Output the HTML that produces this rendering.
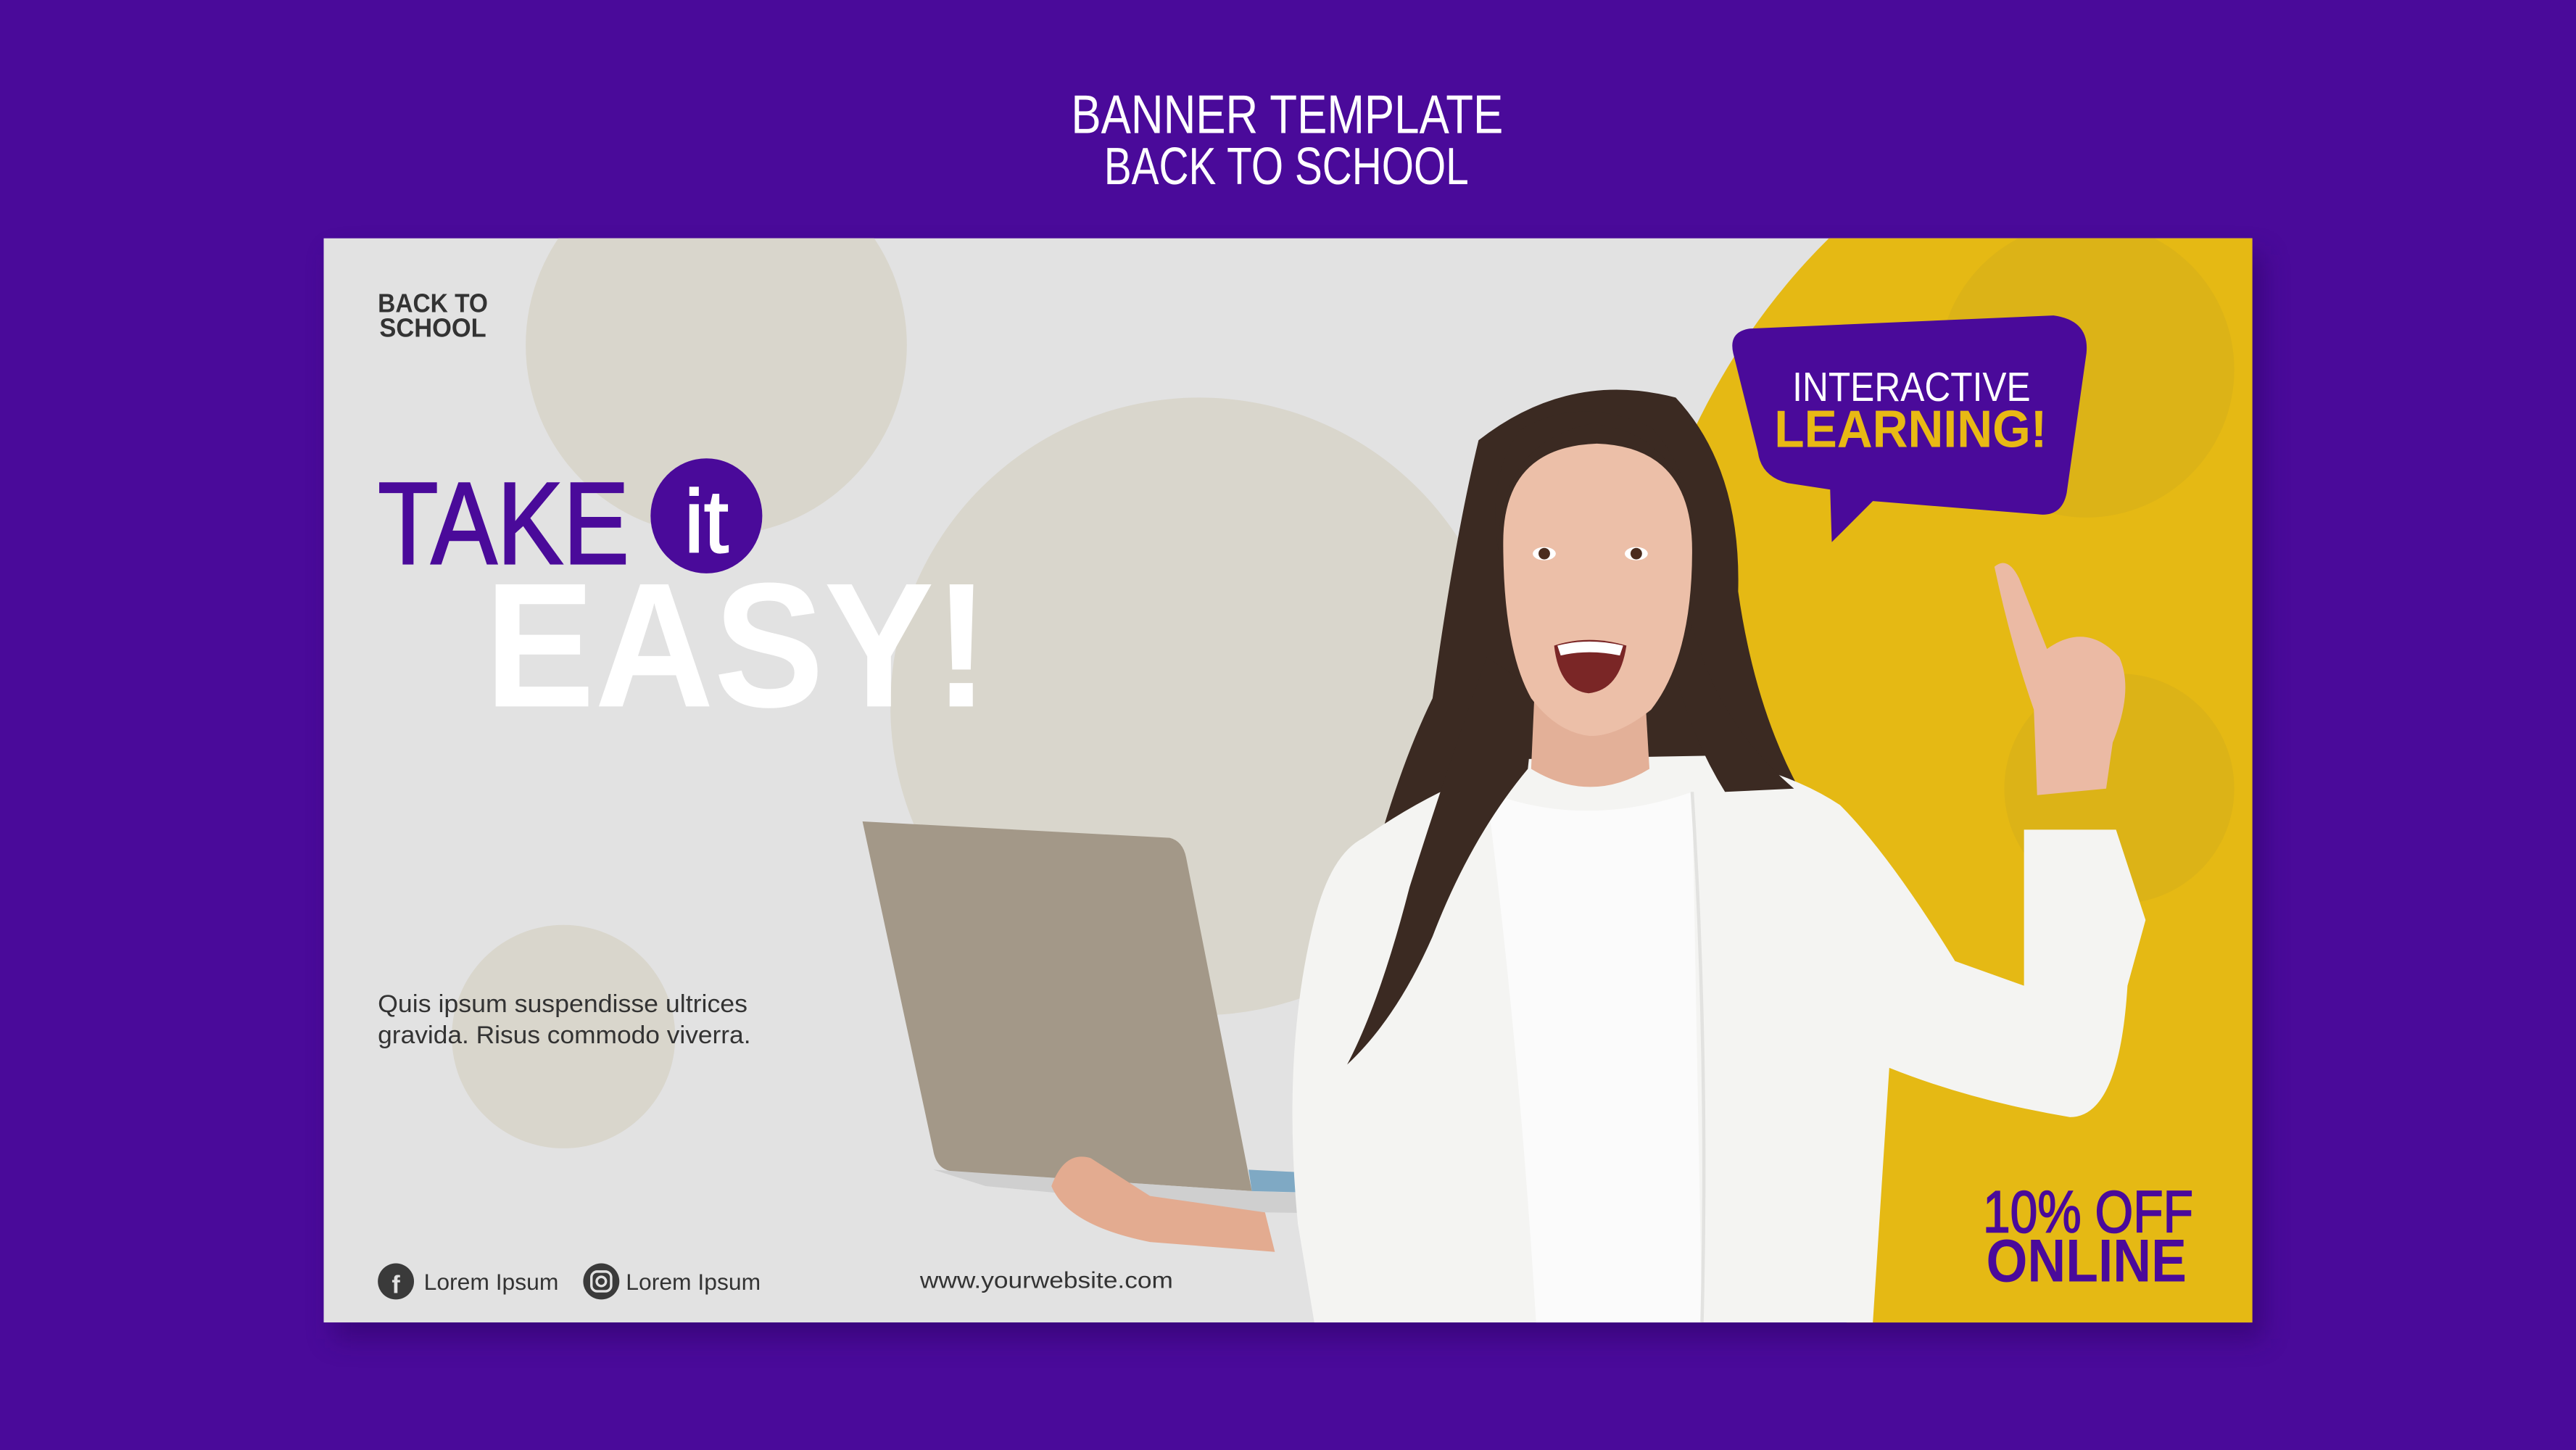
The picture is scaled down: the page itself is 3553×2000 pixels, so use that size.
<!DOCTYPE html>
<html><head><meta charset="utf-8"><style>
html,body{margin:0;padding:0;background:#4a0a9a;}
svg{display:block;}
</style></head><body>
<svg width="3553" height="2000" viewBox="0 0 1568 882.6" xmlns="http://www.w3.org/2000/svg">
<defs>
<clipPath id="b"><rect x="197" y="145" width="1174" height="660"/></clipPath>
<filter id="sh" x="-10%" y="-10%" width="120%" height="130%"><feGaussianBlur stdDeviation="8"/></filter>
</defs>
<rect width="1568" height="883" fill="#4a0a9a"/>
<g font-family="Liberation Sans, sans-serif" fill="#fff">
<text x="652" y="81" font-size="33" textLength="263" lengthAdjust="spacingAndGlyphs">BANNER TEMPLATE</text>
<text x="672" y="112" font-size="32" textLength="222" lengthAdjust="spacingAndGlyphs">BACK TO SCHOOL</text>
</g>
<rect x="203" y="155" width="1174" height="660" fill="#2a0060" opacity="0.5" filter="url(#sh)"/>
<g clip-path="url(#b)">
<rect x="197" y="145" width="1174" height="660" fill="#e2e2e2"/>
<circle cx="436" cy="210" r="116" fill="#d9d6cc"/>
<circle cx="730" cy="430" r="188" fill="#d9d6cc"/>
<circle cx="343" cy="631" r="68" fill="#d9d6cc"/>
<ellipse cx="1335" cy="470" rx="350" ry="420" fill="#e5b914"/>
<circle cx="1270" cy="225" r="90" fill="#dcb317"/>
<circle cx="1290" cy="480" r="70" fill="#dcb317"/>
<!-- laptop -->
<path d="M525,500 L712,510 Q720,512 722,522 L762,725 L580,713 Q570,712 568,700 Z" fill="#a39888"/>
<path d="M568,712 L762,725 L938,731 L936,740 L770,738 L600,722 Z" fill="#cfcfcf"/>
<path d="M760,712 L800,714 L800,726 L762,725 Z" fill="#7fa9c4"/>
<!-- hair back -->
<path d="M900,268 Q955,225 1020,242 Q1060,285 1058,360 Q1068,430 1095,480 L1040,484 L1000,470 L930,470 Q890,520 868,590 Q850,640 838,650 Q822,600 832,540 Q850,470 872,425 Q885,330 900,268 Z" fill="#3b2a22"/>
<!-- shirt -->
<path d="M830,510 Q880,475 930,462 L1040,460 Q1090,470 1120,490 Q1150,520 1190,585 L1232,600 L1232,505 L1288,505 L1306,560 L1295,600 Q1290,680 1260,680 Q1200,670 1150,650 L1140,805 L800,805 L790,745 Q780,640 800,560 Q810,520 830,510 Z" fill="#f4f4f2"/>
<path d="M905,482 Q965,505 1030,482 L1036,805 L935,805 Q925,640 905,482 Z" fill="#fbfbfb"/>
<path d="M1030,482 Q1040,640 1036,805" stroke="#e2e2e0" stroke-width="2" fill="none"/>
<!-- hair front strands -->
<path d="M905,400 Q880,470 858,540 Q840,610 820,648 Q850,620 872,570 Q895,510 930,468 L935,420 Z" fill="#3b2a22"/>
<path d="M1030,380 Q1045,440 1092,480 L1050,482 Q1030,450 1020,410 Z" fill="#3b2a22"/>
<!-- neck & face -->
<path d="M935,400 L1000,400 L1004,468 Q968,490 932,468 Z" fill="#e3b098"/>
<path d="M915,330 Q915,272 972,270 Q1030,272 1030,335 Q1030,400 1005,432 Q985,448 968,448 Q948,446 932,425 Q915,395 915,330 Z" fill="#ecbfa8"/>
<path d="M912,335 Q912,270 968,258 Q1022,262 1032,325 Q1028,285 1005,260 Q960,240 925,262 Q905,290 912,335 Z" fill="#3b2a22"/>
<ellipse cx="940" cy="337" rx="7" ry="4" fill="#fff"/><circle cx="940" cy="337" r="3.5" fill="#4a2c1e"/>
<ellipse cx="996" cy="337" rx="7" ry="4" fill="#fff"/><circle cx="996" cy="337" r="3.5" fill="#4a2c1e"/>
<path d="M946,393 Q967,386 990,393 Q986,420 967,422 Q949,420 946,393 Z" fill="#7a2626"/>
<path d="M948,393 Q967,388 988,393 L986,399 Q967,395 950,399 Z" fill="#fff"/>
<!-- raised hand -->
<path d="M1214,345 Q1222,338 1229,352 L1246,395 Q1270,378 1290,400 Q1299,420 1286,452 L1282,480 L1240,484 L1238,432 Q1224,392 1214,345 Z" fill="#ebbaa4"/>
<!-- hand holding laptop -->
<path d="M640,722 Q648,700 664,705 L700,728 L770,738 L776,762 L700,756 Q650,746 640,722 Z" fill="#e3ab90"/>
<!-- speech bubble -->
<path d="M1065,200 L1250,192 Q1272,195 1270,215 L1258,300 Q1255,315 1240,313 L1140,305 L1115,330 L1114,298 L1088,294 Q1072,290 1070,275 L1055,215 Q1052,202 1065,200 Z" fill="#4a0a9a"/>
<g font-family="Liberation Sans, sans-serif">
<text x="1091" y="244" font-size="25" fill="#fff" textLength="145" lengthAdjust="spacingAndGlyphs">INTERACTIVE</text>
<text x="1080" y="272" font-size="32" font-weight="bold" fill="#e8b914" textLength="166" lengthAdjust="spacingAndGlyphs">LEARNING!</text>
<text x="230" y="190" font-size="16" font-weight="bold" fill="#333" textLength="67" lengthAdjust="spacingAndGlyphs">BACK TO</text>
<text x="231" y="205" font-size="16" font-weight="bold" fill="#333" textLength="65" lengthAdjust="spacingAndGlyphs">SCHOOL</text>
<text x="230" y="343" font-size="71" fill="#4a0a9a" stroke="#4a0a9a" stroke-width="1.2" textLength="153" lengthAdjust="spacingAndGlyphs">TAKE</text>
<ellipse cx="430" cy="314" rx="34" ry="35" fill="#4a0a9a"/>
<text x="430" y="336" font-size="54" fill="#fff" stroke="#fff" stroke-width="1" text-anchor="middle">it</text>
<text x="295" y="430" font-size="108" font-weight="bold" fill="#fff" textLength="307" lengthAdjust="spacingAndGlyphs">EASY!</text>
<text x="230" y="616" font-size="15" fill="#333" textLength="225" lengthAdjust="spacingAndGlyphs">Quis ipsum suspendisse ultrices</text>
<text x="230" y="635" font-size="15" fill="#333" textLength="227" lengthAdjust="spacingAndGlyphs">gravida. Risus commodo viverra.</text>
<circle cx="241" cy="780" r="11" fill="#3a3a3a"/>
<text x="238.5" y="787" font-size="15" font-weight="bold" fill="#e2e2e2">f</text>
<text x="258" y="785" font-size="14" fill="#333" textLength="82" lengthAdjust="spacingAndGlyphs">Lorem Ipsum</text>
<circle cx="366" cy="780" r="11" fill="#3a3a3a"/>
<rect x="360" y="774" width="12" height="12" rx="3.5" fill="none" stroke="#e2e2e2" stroke-width="1.5"/>
<circle cx="366" cy="780" r="2.8" fill="none" stroke="#e2e2e2" stroke-width="1.5"/>
<text x="381" y="785" font-size="14" fill="#333" textLength="82" lengthAdjust="spacingAndGlyphs">Lorem Ipsum</text>
<text x="560" y="784" font-size="14" fill="#333" textLength="154" lengthAdjust="spacingAndGlyphs">www.yourwebsite.com</text>
<text x="1207" y="750" font-size="36" fill="#4a0a9a" stroke="#4a0a9a" stroke-width="0.8" textLength="128" lengthAdjust="spacingAndGlyphs">10% OFF</text>
<text x="1209" y="780" font-size="37" font-weight="bold" fill="#4a0a9a" textLength="122" lengthAdjust="spacingAndGlyphs">ONLINE</text>
</g>
</g>
</svg>
</body></html>
